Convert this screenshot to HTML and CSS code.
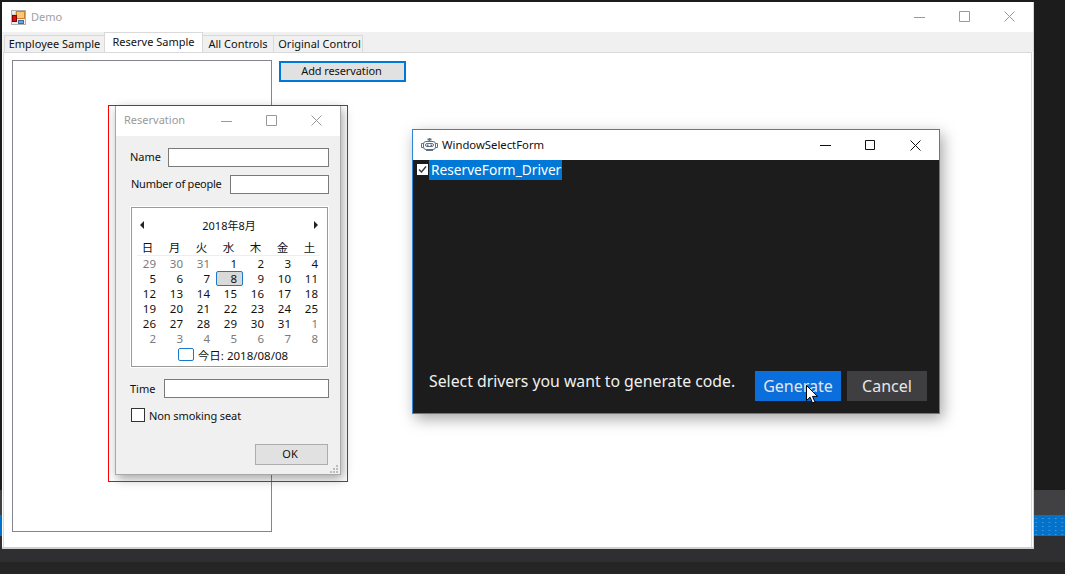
FILE: index.html
```html
<!DOCTYPE html>
<html lang="en">
<head>
<meta charset="utf-8">
<title>Demo</title>
<link rel="stylesheet" href="styles.css">
</head>
<body>
<div class="desktop">
  <div class="band band-top"></div>
  <div class="band band-gray"></div>
  <div class="band band-blue"></div>
  <div class="band band-mid"></div>
  <div class="band band-low"></div>

  <div class="win main-win">
    <div class="titlebar main-title">
      <svg class="app-icon" width="15" height="15" viewBox="0 0 15 15">
        <rect x="0.5" y="0.5" width="14" height="14" fill="#eeeeee" stroke="#b0b0b0"/>
        <path d="M.5 5h4M.5 10h4M5 .5v4M10 10v4" stroke="#b0b0b0" fill="none"/>
        <rect x="5.500" y="1.500" width="8" height="7" fill="#f7c677" stroke="#c9822a"/>
        <rect x="1.500" y="5.500" width="4" height="6" fill="#d81010" stroke="#8a0000"/>
        <rect x="7.500" y="10.500" width="5" height="3" fill="#6aa6de" stroke="#3a6ea5"/>
      </svg>
      <span class="main-caption">Demo</span>
      <div class="caption-btns main-btns">
        <svg width="11" height="11" viewBox="0 0 11 11"><path d="M0 6.500h11" stroke="#999" fill="none"/></svg>
        <svg width="11" height="11" viewBox="0 0 11 11"><path d="M.5.5h10v10H.5z" stroke="#999" fill="none"/></svg>
        <svg width="11" height="11" viewBox="0 0 11 11"><path d="M.5.5l10 10M10.500.5l-10 10" stroke="#999" fill="none"/></svg>
      </div>
    </div>
    <div class="tabs">
      <div class="tab tab-a">Employee Sample</div>
      <div class="tab tab-b active">Reserve Sample</div>
      <div class="tab tab-c">All Controls</div>
      <div class="tab tab-d">Original Control</div>
    </div>
    <div class="tab-page">
      <div class="panel"></div>
      <button class="add-btn">Add reservation</button>
    </div>
  </div>

  <div class="win res-win">
    <div class="titlebar res-title">
      <span class="res-caption">Reservation</span>
      <div class="caption-btns res-btns">
        <svg width="11" height="11" viewBox="0 0 11 11"><path d="M0 6.500h11" stroke="#999" fill="none"/></svg>
        <svg width="11" height="11" viewBox="0 0 11 11"><path d="M.5.5h10v10H.5z" stroke="#999" fill="none"/></svg>
        <svg width="11" height="11" viewBox="0 0 11 11"><path d="M.5.5l10 10M10.500.5l-10 10" stroke="#999" fill="none"/></svg>
      </div>
    </div>
    <div class="res-body">
      <div class="field field-name"><label>Name</label><div class="input"></div></div>
      <div class="field field-num"><label>Number of people</label><div class="input"></div></div>
      <div class="calendar">
        <div class="cal-head">
          <span class="arrow arrow-l"></span>
          <span>2018年8月</span>
          <span class="arrow arrow-r"></span>
        </div>
        <div class="cal-week">
          <span>日</span><span>月</span><span>火</span><span>水</span><span>木</span><span>金</span><span>土</span>
        </div>
        <div class="cal-days">
          <span class="off">29</span><span class="off">30</span><span class="off">31</span><span>1</span><span>2</span><span>3</span><span>4</span>
          <span>5</span><span>6</span><span>7</span><span class="sel">8</span><span>9</span><span>10</span><span>11</span>
          <span>12</span><span>13</span><span>14</span><span>15</span><span>16</span><span>17</span><span>18</span>
          <span>19</span><span>20</span><span>21</span><span>22</span><span>23</span><span>24</span><span>25</span>
          <span>26</span><span>27</span><span>28</span><span>29</span><span>30</span><span>31</span><span class="off">1</span>
          <span class="off">2</span><span class="off">3</span><span class="off">4</span><span class="off">5</span><span class="off">6</span><span class="off">7</span><span class="off">8</span>
        </div>
        <div class="cal-today"><span class="today-box"></span><span>今日: 2018/08/08</span></div>
      </div>
      <div class="field field-time"><label>Time</label><div class="input"></div></div>
      <div class="check-row"><span class="check"></span><span>Non smoking seat</span></div>
      <div class="ok-row"><button class="ok-btn">OK</button></div>
      <svg class="grip" width="9" height="9" viewBox="0 0 9 9" fill="#bdbdbd"><rect x="6" y="0" width="2" height="2"/><rect x="3" y="3" width="2" height="2"/><rect x="6" y="3" width="2" height="2"/><rect x="0" y="6" width="2" height="2"/><rect x="3" y="6" width="2" height="2"/><rect x="6" y="6" width="2" height="2"/></svg>
    </div>
  </div>

  <div class="red-mark"></div>

  <div class="win sel-win">
    <div class="titlebar sel-title">
      <svg class="robot" width="17" height="14" viewBox="0 0 17 14" fill="none" stroke="#5f7088">
        <path d="M8.500 0v3"/>
        <rect x="6.500" y="0.500" width="4" height="2" fill="#5f7088" stroke="none"/>
        <rect x="2.500" y="3.500" width="12" height="8" rx="2.500"/>
        <path d="M2.500 5.500H.5v4h2M14.500 5.500h2v4h-2"/>
        <rect x="4.500" y="5.500" width="8" height="3" rx="1.500"/>
        <rect x="6" y="6.500" width="1.500" height="1.500" fill="#5f7088" stroke="none"/>
        <rect x="9.500" y="6.500" width="1.500" height="1.500" fill="#5f7088" stroke="none"/>
        <path d="M5 12.500h7"/>
      </svg>
      <span class="sel-caption">WindowSelectForm</span>
      <div class="caption-btns sel-btns">
        <svg width="11" height="11" viewBox="0 0 11 11"><path d="M0 5.500h11" stroke="#111" fill="none"/></svg>
        <svg width="11" height="11" viewBox="0 0 11 11"><path d="M.5.5h9v9h-9z" stroke="#111" fill="none"/></svg>
        <svg width="11" height="11" viewBox="0 0 11 11"><path d="M.5.5l10 10M10.500.5l-10 10" stroke="#111" fill="none"/></svg>
      </div>
    </div>
    <div class="sel-body">
      <div class="driver-row">
        <svg class="driver-check" width="11" height="11" viewBox="0 0 11 11"><rect width="11" height="11" fill="#fff"/><path d="M2 5.500l2.500 2.500L9 2.500" stroke="#333" stroke-width="1.300" fill="none"/></svg>
        <span class="driver-name">ReserveForm_Driver</span>
      </div>
      <div class="sel-foot">
        <span class="sel-msg">Select drivers you want to generate code.</span>
        <button class="dark-btn gen-btn">Generate</button>
        <button class="dark-btn cancel-btn">Cancel</button>
      </div>
    </div>
  </div>

  <svg class="cursor" width="13" height="19" viewBox="0 0 13 19"><path d="M.5.5v15l3.600-3.300 2.400 5.800 2.500-1-2.500-5.600h5z" fill="#fff" stroke="#000"/></svg>
</div>
</body>
</html>
```
FILE: styles.css
```css
* { box-sizing: border-box; }
html, body { margin: 0; padding: 0; }
body { font-family: "Noto Sans", "Noto Sans CJK JP", sans-serif; font-size: 11px; color: #111; }
.desktop { position: relative; width: 1065px; height: 574px; overflow: hidden; background: #1c1c1c; display: flex; flex-direction: column; }
.band-top { height: 490px; background: #1c1c1c; }
.band-gray { height: 25px; background: #414143; }
.band-blue { height: 21px; background-color: #0272cb;
  background-image: radial-gradient(circle at .5px .5px, #4a9fe2 .8px, transparent 1px);
  background-size: 6.500px 4px; background-position: 2px 7px; background-repeat: repeat; }
.band-mid { height: 26px; background: #2f2f31; }
.band-low { height: 12px; background: #252526; }

.win { position: absolute; display: flex; flex-direction: column; }
.titlebar { display: flex; align-items: center; background: #fff; flex: none; }
.caption-btns { display: flex; margin-left: auto; align-items: center; }

/* main window */
.main-win { left: 2px; top: 2px; width: 1032px; height: 547px; background: #fff; border-right: 1px solid #d6d6d6; border-bottom: 2px solid #d0d0d0; }
.main-title { height: 30px; padding-left: 9px; }
.app-icon { margin-right: 5px; }
.main-caption { color: #a0a0a0; font-size: 11px; margin-top: -1px; }
.main-btns { gap: 34px; padding-right: 18px; margin-top: -2px; }
.tabs { display: flex; align-items: flex-end; height: 20px; background: #f0f0f0; padding-left: 2px; flex: none; }
.tab { height: 17px; background: #f0f0f0; border: 1px solid #d9d9d9; border-bottom: 0; margin-right: -1px; text-align: center; line-height: 16px; white-space: nowrap; overflow: hidden; }
.tab-a { width: 101px; }
.tab-b { width: 99px; }
.tab-c { width: 72px; }
.tab-d { width: 90px; padding-left: 3px; }
.tab.active { height: 20px; background: #fff; line-height: 18px; position: relative; }
.tab-page { flex: 1; display: flex; align-items: flex-start; gap: 7px; padding: 7px 0 0 8px; border: 1px solid #d9d9d9; border-bottom: 0; margin: 0 1px 0 1px; background: #fff; }
.panel { width: 260px; height: 472px; border: 1px solid #85858e; background: #fff; }
.add-btn { width: 127px; height: 21px; margin-top: 1px; border: 2px solid #0078d7; background: #e1e1e1; font: inherit; letter-spacing: -.1px; padding: 0 2px 2px 0; color: #111; }

/* red mark */
.red-mark { position: absolute; left: 108px; top: 105px; width: 240px; height: 377px; border: 1px solid #f00; }

/* reservation */
.res-win { left: 115px; top: 105px; width: 226px; height: 370px; border: 1px solid #a9a9a9; border-top: 0; background: #f0f0f0; box-shadow: 2px 4px 10px rgba(0,0,0,.35); }
.res-title { height: 31px; padding-left: 8px; }
.res-caption { color: #9a9a9a; font-size: 11px; margin-top: -2px; }
.res-btns { gap: 34px; padding-right: 18px; }
.res-body { position: relative; flex: 1; padding: 12px 11px 0 14px; }
.field { display: flex; align-items: center; height: 19px; }
.field label { flex: none; white-space: nowrap; }
.input { flex: 1; height: 19px; background: #fff; border: 1px solid #7a7a7a; }
.field-name label { width: 38px; padding-bottom: 2px; }
.field-num { margin-top: 8px; padding-left: 1px; }
.field-num label { width: 99px; letter-spacing: -.25px; padding-bottom: 2px; }
.field-time label { width: 34px; }
.field-time { margin-top: 12px; }
.calendar { width: 197px; height: 160px; margin: 13px 0 0 1px; background: #fff; border: 1px solid #9a9a9a; outline: 1px solid #fff; display: flex; flex-direction: column; padding: 0 7px; font-size: 11.500px; }
.cal-head { display: flex; justify-content: space-between; align-items: center; height: 19px; margin-top: 7px; padding: 0 2px 0 1px; font-size: 11px; }
.arrow { width: 0; height: 0; border-top: 4px solid transparent; border-bottom: 4px solid transparent; }
.arrow-l { border-right: 4px solid #222; }
.arrow-r { border-left: 4px solid #222; }
.cal-week { display: grid; grid-template-columns: repeat(7, 27px); height: 19px; margin-left: -2px; margin-top: 3px; border-bottom: 1px solid #eee; text-align: center; line-height: 22px; width: 183px; }
.cal-week span { width: 27px; padding-right: 6px; }
.cal-days { display: grid; grid-template-columns: repeat(7, 27px); grid-auto-rows: 15px; margin-left: -4px; line-height: 15px; text-align: right; }
.cal-days span { padding-right: 6px; }
.cal-days .off { color: #7a7a7a; }
.cal-days .sel { background: #d9d9d9; border: 1px solid #1979ca; border-radius: 2px; line-height: 13px; padding-right: 5px; }
.cal-today { display: flex; align-items: center; justify-content: center; gap: 4px; height: 17px; font-size: 11.500px; margin-left: 7px; }
.today-box { width: 16px; height: 13px; border: 1px solid #1979ca; border-radius: 2px; }
.check-row { display: flex; align-items: center; gap: 4px; margin: 10px 0 0 1px; height: 14px; letter-spacing: -.1px; }
.check { width: 14px; height: 14px; background: #fff; border: 1px solid #333; }
.ok-row { display: flex; justify-content: flex-end; margin-top: 22px; }
.ok-btn { width: 73px; height: 21px; background: #e1e1e1; border: 1px solid #adadad; font: inherit; padding: 0 3px 2px 0; color: #111; margin-right: 1px; }
.grip { position: absolute; right: 1px; bottom: 0; }

/* window select */
.sel-win { left: 412px; top: 129px; width: 528px; height: 285px; border: 1px solid #2b88d8; background: #1c1c1c; box-shadow: 3px 5px 14px rgba(0,0,0,.35); }
.sel-title { height: 30px; padding-left: 8px; }
.robot { margin-right: 4px; }
.sel-caption { font-size: 11.300px; color: #111; margin-top: -1px; }
.sel-btns { gap: 34px; padding-right: 18px; }
.sel-body { flex: 1; background: #1c1c1c; display: flex; flex-direction: column; }
.driver-row { display: flex; align-items: flex-start; padding-left: 4px; }
.driver-check { margin-top: 4px; flex: none; }
.driver-name { margin-left: 1px; background: #0078d7; color: #fff; font-size: 13.700px; line-height: 19px; height: 20px; padding: 0 1px 0 2px; }
.sel-foot { margin-top: auto; display: flex; align-items: flex-start; padding: 0 12px 12px 16px; color: #f0f0f0; }
.sel-msg { font-size: 15.800px; width: 326px; line-height: 20px; margin-top: 0; white-space: nowrap; }
.dark-btn { border: 0; height: 30px; color: #e6e6e6; font: inherit; font-size: 16px; padding: 0; }
.gen-btn { width: 86px; background: #0a6edc; margin-right: 6px; }
.cancel-btn { width: 80px; background: #3f3f41; }

.cursor { position: absolute; left: 806px; top: 385px; }
```
